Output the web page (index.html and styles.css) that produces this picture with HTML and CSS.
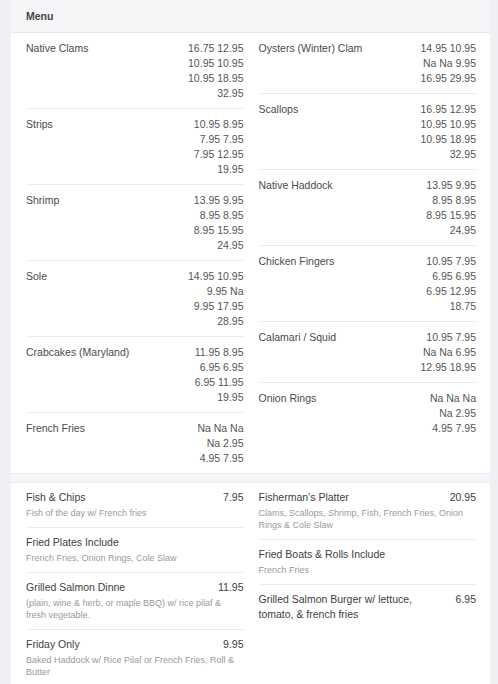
FILE: index.html
```html
<!DOCTYPE html>
<html>
<head>
<meta charset="utf-8">
<link rel="stylesheet" href="styles.css">
</head>
<body>
<div class="page">
  <div class="wrap">
    <div class="head">Menu</div>
    <div class="section grid">
      <div class="col">
        <div class="row"><div class="name">Native Clams</div><div class="prices"><div>16.75 12.95</div><div>10.95 10.95</div><div>10.95 18.95</div><div>32.95</div></div></div>
        <div class="row"><div class="name">Strips</div><div class="prices"><div>10.95 8.95</div><div>7.95 7.95</div><div>7.95 12.95</div><div>19.95</div></div></div>
        <div class="row"><div class="name">Shrimp</div><div class="prices"><div>13.95 9.95</div><div>8.95 8.95</div><div>8.95 15.95</div><div>24.95</div></div></div>
        <div class="row"><div class="name">Sole</div><div class="prices"><div>14.95 10.95</div><div>9.95 Na</div><div>9.95 17.95</div><div>28.95</div></div></div>
        <div class="row"><div class="name">Crabcakes (Maryland)</div><div class="prices"><div>11.95 8.95</div><div>6.95 6.95</div><div>6.95 11.95</div><div>19.95</div></div></div>
        <div class="row"><div class="name">French Fries</div><div class="prices"><div>Na Na Na</div><div>Na 2.95</div><div>4.95 7.95</div></div></div>
      </div>
      <div class="col">
        <div class="row"><div class="name">Oysters (Winter) Clam</div><div class="prices"><div>14.95 10.95</div><div>Na Na 9.95</div><div>16.95 29.95</div></div></div>
        <div class="row"><div class="name">Scallops</div><div class="prices"><div>16.95 12.95</div><div>10.95 10.95</div><div>10.95 18.95</div><div>32.95</div></div></div>
        <div class="row"><div class="name">Native Haddock</div><div class="prices"><div>13.95 9.95</div><div>8.95 8.95</div><div>8.95 15.95</div><div>24.95</div></div></div>
        <div class="row"><div class="name">Chicken Fingers</div><div class="prices"><div>10.95 7.95</div><div>6.95 6.95</div><div>6.95 12.95</div><div>18.75</div></div></div>
        <div class="row"><div class="name">Calamari / Squid</div><div class="prices"><div>10.95 7.95</div><div>Na Na 6.95</div><div>12.95 18.95</div></div></div>
        <div class="row"><div class="name">Onion Rings</div><div class="prices"><div>Na Na Na</div><div>Na 2.95</div><div>4.95 7.95</div></div></div>
      </div>
    </div>
    <div class="section grid second">
      <div class="col">
        <div class="item"><div class="title"><span class="tname">Fish &amp; Chips</span><span class="tprice">7.95</span></div><div class="desc">Fish of the day w/ French fries</div></div>
        <div class="item"><div class="title"><span class="tname">Fried Plates Include</span></div><div class="desc">French Fries, Onion Rings, Cole Slaw</div></div>
        <div class="item"><div class="title"><span class="tname">Grilled Salmon Dinne</span><span class="tprice">11.95</span></div><div class="desc">(plain, wine &amp; herb, or maple BBQ) w/ rice pilaf &amp; fresh vegetable.</div></div>
        <div class="item"><div class="title"><span class="tname">Friday Only</span><span class="tprice">9.95</span></div><div class="desc">Baked Haddock w/ Rice Pilaf or French Fries, Roll &amp; Butter</div></div>
      </div>
      <div class="col">
        <div class="item"><div class="title"><span class="tname">Fisherman’s Platter</span><span class="tprice">20.95</span></div><div class="desc">Clams, Scallops, Shrimp, Fish, French Fries, Onion Rings &amp; Cole Slaw</div></div>
        <div class="item"><div class="title"><span class="tname">Fried Boats &amp; Rolls Include</span></div><div class="desc">French Fries</div></div>
        <div class="item"><div class="title"><span class="tname">Grilled Salmon Burger w/ lettuce, tomato, &amp; french fries</span><span class="tprice">6.95</span></div></div>
      </div>
    </div>
  </div>
</div>
</body>
</html>
```

FILE: styles.css
```css
html, body {
  margin: 0;
  padding: 0;
}
body {
  background: #eff0f4;
  font-family: "Liberation Sans", Arial, sans-serif;
  font-size: 10.5px;
  line-height: 15px;
  color: #4a4a4a;
}
.page {
  padding: 0 8px 0 11px;
}
.wrap {
  background: #f6f6f9;
}
.head {
  height: 32px;
  line-height: 32px;
  padding-left: 15px;
  font-weight: bold;
  color: #444;
  border-bottom: 1px solid #e8e9ed;
}
.section {
  background: #fff;
  padding: 0 14px 0 15px;
  border-bottom: 1px solid #e8e9ed;
}
.grid {
  display: grid;
  grid-template-columns: 1fr 1fr;
  column-gap: 15px;
}
.second {
  margin-top: 8px;
  border-top: 1px solid #eeeff2;
  padding-bottom: 20px;
}
.row {
  display: flex;
  justify-content: space-between;
  padding: 8px 0 7px;
  border-bottom: 1px solid #ececef;
}
.col .row:last-child {
  border-bottom: none;
}
.prices {
  text-align: right;
  color: #555;
}
.item {
  padding: 7px 0 8px;
  border-bottom: 1px solid #ececef;
}
.col .item:last-child {
  border-bottom: none;
}
.title {
  display: flex;
  justify-content: space-between;
  gap: 20px;
  color: #3e3e3e;
}
.tprice {
  flex: none;
}
.desc {
  margin-top: 2px;
  font-size: 9px;
  line-height: 12px;
  color: #9a9a9a;
}
```
